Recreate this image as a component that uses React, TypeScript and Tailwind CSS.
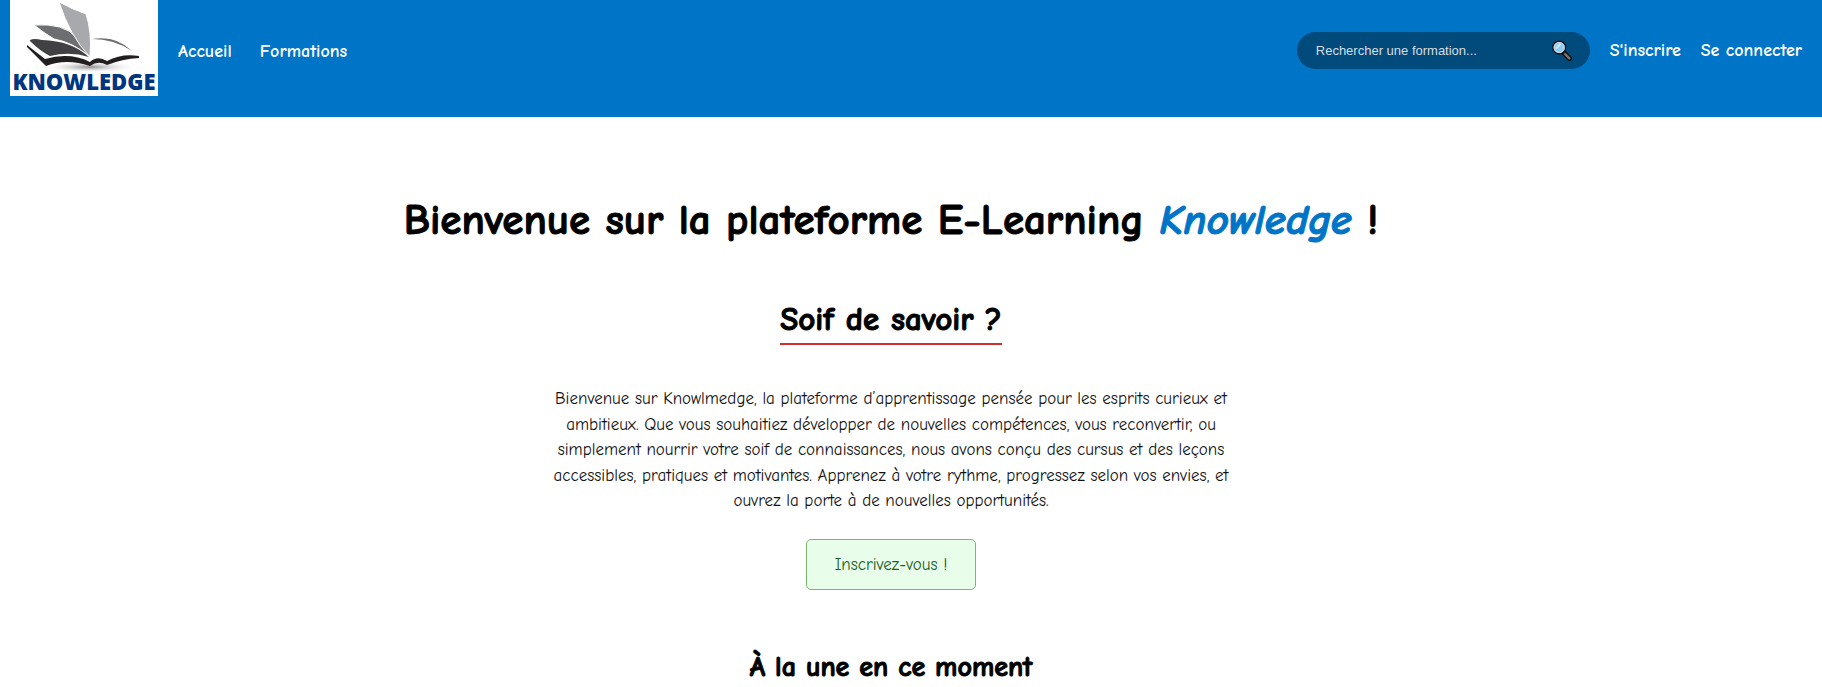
import React from "react";

function Logo() {
  return (
    <svg viewBox="0 0 148 96" className="h-24 w-[148px] bg-white" role="img" aria-label="Knowledge">
      <defs>
        <radialGradient id="shade">
          <stop offset="0" stopColor="#8d8d8d" />
          <stop offset="1" stopColor="#ffffff" stopOpacity="0" />
        </radialGradient>
      </defs>
      <ellipse cx="80" cy="67" rx="48" ry="6" fill="url(#shade)" />
      <path d="M17 45 L35 59 Q60 52 80 62 Q87 55 97 61 Q112 53 129 56 L129 58 Q112 59 97 65 Q88 60 80 66 Q56 58 36 66 L17 47Z" fill="#231f20" />
      <path d="M20 40 Q24 38 32 40 Q62 41 79 57 Q60 51 40 56 Q30 51 20 41Z" fill="#414042" />
      <path d="M24 25 Q54 23 66 37 L79 56 Q62 42 44 39 Q34 33 24 25Z" fill="#6d6e71" stroke="#ffffff" strokeWidth="1" />
      <path d="M49 2 Q62 9 76 14 Q82 32 80 56 L79 56 Q60 36 49 2Z" fill="#a7a9ac" stroke="#ffffff" strokeWidth="1" />
      <path d="M82 39 Q106 35 122 51 Q104 39 82 39Z" fill="#6d6e71" />
      <text x="74" y="90" textAnchor="middle" className="fill-[#003580] font-['Open_Sans',sans-serif] text-[22px] font-extrabold">
        KNOWLEDGE
      </text>
    </svg>
  );
}

function Magnifier() {
  return (
    <svg viewBox="0 0 20 21" className="h-[21px] w-5" aria-hidden="true">
      <path d="M11.5 12.5 L17.5 18.5" stroke="#111" strokeWidth="5" strokeLinecap="round" />
      <path d="M13 14 L17.4 18.4" stroke="#777" strokeWidth="2.4" strokeLinecap="round" />
      <circle cx="7.2" cy="7.5" r="6.3" fill="#9fd3f5" stroke="#111" strokeWidth="1.4" />
      <circle cx="7.2" cy="7.5" r="5.1" fill="#8ccbf5" stroke="#d8dde0" strokeWidth="1" />
      <path d="M4 8.5 L8.5 4" stroke="#cdeafb" strokeWidth="2" />
    </svg>
  );
}

export default function App() {
  return (
    <div className="min-h-screen bg-white font-['Comic_Sans_MS','Comic_Neue',cursive] text-[17px] text-black">
      <header className="flex h-[117px] items-start bg-[#0074c7] pr-5 pl-2.5 text-lg leading-6 font-bold text-white">
        <a href="#accueil">
          <Logo />
        </a>
        <nav className="mt-10 ml-5 flex gap-7" aria-label="Principal">
          <a href="#accueil">Accueil</a>
          <a href="#formations">Formations</a>
        </nav>
        <div className="mt-8 ml-auto flex items-center gap-5">
          <form className="flex h-[37px] w-[293px] items-center rounded-full bg-[#004a7c] pr-[18px] pl-[19px]">
            <input
              type="search"
              aria-label="Rechercher une formation"
              placeholder="Rechercher une formation..."
              className="min-w-0 flex-1 bg-transparent font-['Liberation_Sans',Arial,sans-serif] text-[13px] font-normal text-white outline-none placeholder:text-[#d5dde3]"
            />
            <button type="submit" aria-label="Rechercher">
              <Magnifier />
            </button>
          </form>
          <a href="#inscription">S'inscrire</a>
          <a href="#connexion">Se connecter</a>
        </div>
      </header>
      <main className="flex flex-col items-center pt-[73px] pr-10 text-center">
        <h1 className="text-[43px] leading-[60px] font-bold [-webkit-text-stroke:1px]">
          Bienvenue sur la plateforme E-Learning <em className="text-[#0074c7]">Knowledge</em> !
        </h1>
        <h2 className="mt-[47px] border-b-2 border-[#d32f2f] pb-0.5 text-[33px] leading-[44px] font-bold [-webkit-text-stroke:1px]">
          Soif de savoir ?
        </h2>
        <p className="mt-[41px] leading-normal text-[#111111]">
          Bienvenue sur Knowlmedge, la plateforme d’apprentissage pensée pour les esprits curieux et
          <br />
          ambitieux. Que vous souhaitiez développer de nouvelles compétences, vous reconvertir, ou
          <br />
          simplement nourrir votre soif de connaissances, nous avons conçu des cursus et des leçons
          <br />
          accessibles, pratiques et motivantes. Apprenez à votre rythme, progressez selon vos envies, et
          <br />
          ouvrez la porte à de nouvelles opportunités.
        </p>
        <a href="#inscription" className="mt-[25px] rounded-[5px] border border-[#7cb86b] bg-[#e8fdea] px-7 py-3 leading-[25px] text-[#1b5e20]">
          Inscrivez-vous !
        </a>
        <h2 className="mt-[57px] text-[28px] leading-10 font-bold [-webkit-text-stroke:1px]">À la une en ce moment</h2>
      </main>
    </div>
  );
}
